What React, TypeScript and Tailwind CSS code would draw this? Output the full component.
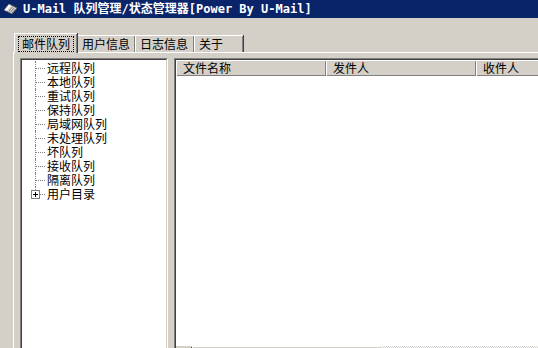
import React from 'react'

/* Win2000-style queue manager window */

const TREE = ['远程队列', '本地队列', '重试队列', '保持队列', '局域网队列', '未处理队列', '坏队列', '接收队列', '隔离队列']

const TABS = [
  { label: '用户信息', w: 'w-[58px]' },
  { label: '日志信息', w: 'w-[59px]' },
  { label: '关于', w: 'w-[49px]' },
]

const COLS = [
  { label: '文件名称', w: 'w-[150px]' },
  { label: '发件人', w: 'w-[150px]' },
  { label: '收件人', w: 'w-[120px]' },
]

const MailIcon = () => (
  <svg width="15" height="14" viewBox="0 0 15 14">
    <path d="M1 8 L6 2 L14 6 L9 12 Z" fill="#d8d8d8" stroke="#5a5a5a" strokeWidth="1" />
    <path d="M1.5 8 L6 2.5 L8 3.5 L3.5 9 Z" fill="#ffffff" />
    <path d="M6 9 L9.5 5 M7.5 10 L11 6 M9 11 L12.5 7" stroke="#7a7a7a" strokeWidth="1" />
  </svg>
)

// sunken 2px frame, like a Win32 client edge
const Sunken = ({ className, children }: { className?: string; children: React.ReactNode }) => (
  <div className={`border border-t-[#808080] border-l-[#808080] border-r-white border-b-white ${className ?? ''}`}>
    <div className="flex h-full flex-col border border-t-[#404040] border-l-[#404040] border-r-[#d4d0c8] border-b-[#d4d0c8] bg-white">
      {children}
    </div>
  </div>
)

export default function App() {
  return (
    <div className="flex h-[348px] w-[538px] flex-col overflow-hidden bg-[#d4d0c8] font-['Liberation_Sans','Noto_Sans_CJK_SC',sans-serif] text-[12px] text-black">
      {/* Title bar */}
      <div className="flex h-[18px] shrink-0 items-center gap-[5px] bg-[#0a246a] pl-[3px]">
        <MailIcon />
        <span className="whitespace-nowrap font-['DejaVu_Sans_Mono','Noto_Sans_CJK_SC',monospace] text-[12px] font-bold leading-[14px] text-white">
          U-Mail 队列管理/状态管理器[Power By U-Mail]
        </span>
      </div>

      {/* Tabs */}
      <div className="mt-[15px] flex h-[19px] shrink-0 items-end pl-[14px]">
        <div className="relative z-10 -mb-px flex h-[20px] w-[63px] items-start border-l border-t border-white bg-[#d4d0c8] pt-[2px] shadow-[inset_-1px_0_0_#808080,1px_0_0_#404040]">
          <span className="ml-[3px] flex h-[16px] w-[56px] items-center justify-center border border-dotted border-black pt-[2px] leading-[13px]">
            邮件队列
          </span>
        </div>
        {TABS.map((t) => (
          <div
            key={t.label}
            className={`flex h-[17px] ${t.w} items-center border-l border-t border-white pl-[4px] pt-[2px] leading-[14px] shadow-[inset_-1px_0_0_#808080,1px_0_0_#404040]`}
          >
            {t.label}
          </div>
        ))}
      </div>

      {/* Tab page */}
      <div className="ml-[13px] flex flex-1 gap-[6px] border-l border-t border-white pl-[6px] pt-[5px]">
        <Sunken className="h-[320px] w-[148px] shrink-0">
          <div className="flex flex-col pt-[1px]">
            {TREE.map((name) => (
              <div key={name} className="flex h-[14px] items-center pl-[13px]">
                <div className="flex h-full w-[10px] items-center border-l border-dotted border-[#808080]">
                  <div className="w-full border-t border-dotted border-[#808080]" />
                </div>
                <span className="ml-[2px] pt-[2px] leading-[12px]">{name}</span>
              </div>
            ))}
            <div className="flex h-[14px] items-center pl-[13px]">
              <div className="relative flex h-full w-[10px] items-center">
                <div className="absolute left-0 top-0 h-[3px] border-l border-dotted border-[#808080]" />
                <div className="ml-[5px] w-[5px] border-t border-dotted border-[#808080]" />
                <div className="absolute left-[-4px] top-[3px] flex h-[9px] w-[9px] items-center justify-center border border-[#808080] bg-white">
                  <div className="relative h-[5px] w-[5px]">
                    <div className="absolute left-0 top-[2px] h-px w-[5px] bg-black" />
                    <div className="absolute left-[2px] top-0 h-[5px] w-px bg-black" />
                  </div>
                </div>
              </div>
              <span className="ml-[2px] pt-[2px] leading-[12px]">用户目录</span>
            </div>
          </div>
        </Sunken>

        <Sunken className="h-[320px] flex-1 border-r-0">
          <div className="flex h-[16px] shrink-0">
            {COLS.map((c) => (
              <div
                key={c.label}
                className={`${c.w} flex shrink-0 items-center border-l border-t border-white bg-[#d4d0c8] pl-[6px] pt-[1px] leading-[13px] shadow-[inset_-1px_-1px_0_#808080]`}
              >
                {c.label}
              </div>
            ))}
          </div>
          <div className="h-[270px] shrink-0" />
          {/* horizontal scrollbar, mostly below the window */}
          <div className="flex h-[17px] shrink-0">
            <div className="w-[16px] border-l border-t border-[#d4d0c8] bg-[#d4d0c8] shadow-[inset_-1px_-1px_0_#404040]" />
            <div className="w-[190px] border-l border-t border-white bg-[#d4d0c8]" />
            <div className="flex-1 bg-[repeating-conic-gradient(#ffffff_0_25%,#d4d0c8_0_50%)] bg-[length:2px_2px]" />
          </div>
        </Sunken>
      </div>
    </div>
  )
}
